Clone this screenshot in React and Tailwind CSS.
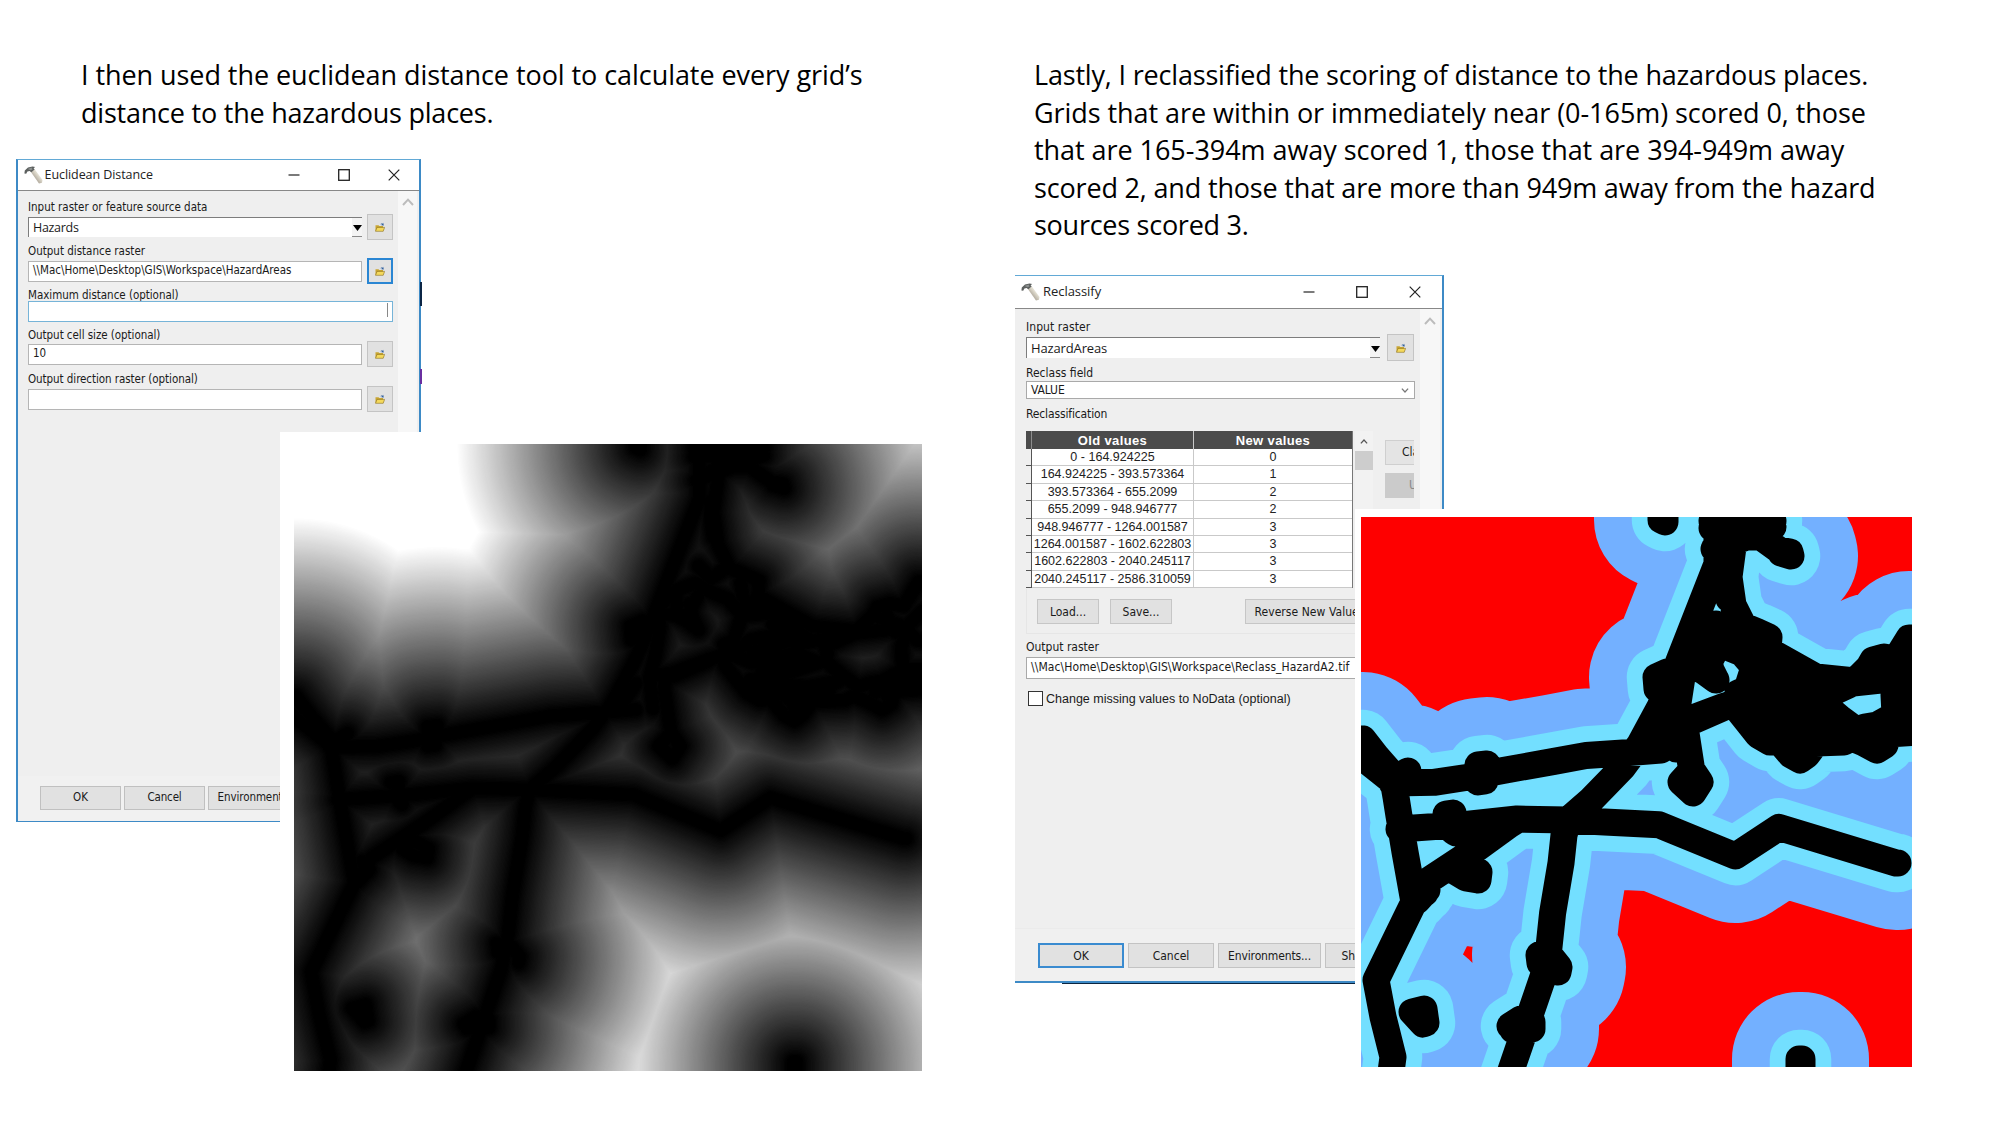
import React from "react";

/* Hazard source features, in map units (551 x 550). */
const ROADS = [
  "M2 222L16 240L31 257L35 280L38 299L44 335L53 385L15 463L22 500L32 540L28 570",
  "M-4 236L16 252L31 264",
  "M47 254L33 262M66 373L56 384M60 366L64 376",
  "M31 266L73 265.3L105 260.5L142 253.4L193 244.4L225 238.5L262 236L300 233",
  "M356 -5L356 47L318 144L308 170L299 190L279 227L262 250L230 283L207 303",
  "M371 -5L372 30L368 60L372 88L382 108M365 50L366 70L368 82",
  "M318 144L321 160L317 186L312 205L315 232",
  "M326 203L325 216L331 255M300 210L285 232",
  "M317 203L332 201L364 189L385 182M332 204L364 190",
  "M38 312L53 311L105 307.4L156 302L207 303L243.5 305L298 307.7L374.4 339L418 310.4L535 346L537 346",
  "M156 303L148 308L115 332L68 363L58 380",
  "M207 303L203 318L200 346L191.6 396L188 430L182 460L170 495L158 530L147 562",
];
const PLACES = [
  "M117 248L126 247L124 264L117 265Z",
  "M295 160L296 172L306 155Z",
  "M351 11L412 10L353 32L372 20L396 20L412 4L351 4",
  "M400 20L418 33L429 35L430 39L420 36",
  "M300 -3L300 3L304 5L304 -3Z",
  "M320 265L331 253L339 265L332 276Z",
  "M85 297L92 296L91 303L92 314L95 316",
  "M118 355L117 363L105 361L95 355L105 348Z",
  "M178 438L179 446L190 440L198 450L197 455",
  "M149 509L160 502L171 505L171 512L152 513",
  "M51 495L63 492L65 506L62 507Z",
  "M438 542L441 542L441 560L438 560Z",
];
const DISTRICT = [
  "M355 107L366 118L380 108L397 115L408 120L407 133L455 160L494 164L508 150L512 143L523 140L535 142L548 121L556 121",
  "M318 144L336 128L352 122L366 130L381 136L393 150L386 172L377 176M336 130L335 150L344 155L355 163M347 140L350 153L355 163",
  "M321 149L345 151L354 134M392 122L394 134",
  "M551 147L540 158L533 178L534 198L551 198M515 153L534 160L546 172L556 173",
  "M534 198L516 208L504 210L495 213L480 202L466 190L468 184L466 178L492 166L520 163",
  "M378 178L378 194L386 204L397 218L409 225L418 224L430 238L439 243L446 238L455 226L483 225L491 221L503 226L516 233L524 228L527 217L556 215",
  "M407 133L398 150L420 148L450 170L420 168L400 172L385 185L402 192L440 183L460 192L430 202L400 207L450 213L478 208L440 228L420 213",
  "M510 218L534 208L551 205",
  "M420 158L436 172L420 178L402 182M440 176L460 172L480 168M410 200L440 193M400 212L420 220L450 220L470 216M440 236L436 222M396 140L412 142M520 150L528 165M520 220L545 208",
];
const SOURCES = [...ROADS, ...PLACES, ...DISTRICT].join("");

const STEPS = 140;
const REACH = 160;
const BANDS = Array.from({ length: STEPS }, (_, i) => {
  const d = REACH * (1 - i / STEPS);
  const g = Math.max(0, Math.min(255, Math.round(((d - 5) / 153) * 255)));
  return { width: 2 * d, color: `rgb(${g},${g},${g})` };
});

function DistanceMap() {
  return (
    <svg viewBox="0 0 551 550" preserveAspectRatio="none" className="block h-[627px] w-[628px] overflow-hidden" fill="none" strokeLinecap="round" strokeLinejoin="round">
      <defs><path id="dist-src" d={SOURCES} /></defs>
      <rect width="551" height="550" fill="#fff" />
      {BANDS.map((b, i) => (
        <use key={i} href="#dist-src" stroke={b.color} strokeWidth={b.width} />
      ))}
    </svg>
  );
}

function ScoreMap() {
  return (
    <svg viewBox="0 0 551 550" className="block h-[550px] w-[551px] overflow-hidden" fill="none" strokeLinecap="round" strokeLinejoin="round">
      <defs><path id="score-src" d={SOURCES} /></defs>
      <rect width="551" height="550" fill="#fe0000" />
      <use href="#score-src" stroke="#73b0ff" strokeWidth="134" />
      <use href="#score-src" stroke="#73dfff" strokeWidth="58.5" />
      <use href="#score-src" stroke="#000" strokeWidth="27" />
    </svg>
  );
}

function Hammer({ className }) {
  return (
    <svg viewBox="0 0 19 18" className={className}>
      <defs>
        <linearGradient id="hammer-handle" x1="0" y1="1" x2="1" y2="0">
          <stop offset="0.3" stopColor="#a8a093" />
          <stop offset="0.6" stopColor="#e0dccf" />
        </linearGradient>
      </defs>
      <path d="M6.4 5.2L10.2 2.8L18.5 14L18 16.8L15 17.4Z" fill="url(#hammer-handle)" />
      <path d="M0.4 7.4L0.8 4.6L4 1.6L8.5 0.4L11.2 0.9L9.6 2.2L10.6 3.6L7.3 6.2L5.6 4.9L3.4 5.6L2.2 7.8Z" fill="#5c605f" />
      <path d="M3.5 3L7.5 1.6L8.6 3.2L6.8 4.2Z" fill="#8d9190" />
    </svg>
  );
}

function FolderButton({ className = "", active = false }) {
  return (
    <div className={`flex shrink-0 items-center justify-center bg-[#e1e1e1] ${active ? "border-2 border-[#2a86d3]" : "border border-[#c4c4c4]"} ${className}`}>
      <svg viewBox="0 0 10 10" className="h-[10px] w-[10px]">
        <path d="M0.5 9V3.2H3.5L4.3 4H8V9Z" fill="#c9a634" />
        <path d="M0.5 9.3L2 5.4H9.6L8.2 9.3Z" fill="#f4d95c" stroke="#8a6d1c" strokeWidth="0.6" />
        <path d="M5 2.8C6 1.2 7 1.4 7.6 1.8L8.2 0.8L8.8 3.4L6.4 3.2L7 2.5C6.3 2.2 5.7 2.3 5 2.8Z" fill="#2f5f9e" />
      </svg>
    </div>
  );
}

function TitleBar({ title, className, titleClass, gaps }) {
  return (
    <div className={`flex items-center border-b border-[#888] bg-white ${className}`}>
      <Hammer className="h-[18px] w-[19px] shrink-0" />
      <span className={`whitespace-nowrap font-['Open_Sans',sans-serif] text-[#222] ${titleClass}`}>{title}</span>
      <svg viewBox="0 0 12 12" className={`ml-auto h-[12px] w-[12px] shrink-0 ${gaps}`}>
        <path d="M0.5 6H11.5" stroke="#222" strokeWidth="1.2" />
      </svg>
      <svg viewBox="0 0 12 12" className={`h-[12px] w-[12px] shrink-0 ${gaps}`}>
        <rect x="0.7" y="0.7" width="10.6" height="10.6" fill="none" stroke="#222" strokeWidth="1.3" />
      </svg>
      <svg viewBox="0 0 12 12" className="h-[12px] w-[12px] shrink-0">
        <path d="M0.7 0.7L11.3 11.3M11.3 0.7L0.7 11.3" stroke="#222" strokeWidth="1.2" />
      </svg>
    </div>
  );
}

function Label({ children, className = "" }) {
  return <div className={`whitespace-nowrap text-[#1a1a1a] ${className}`}>{children}</div>;
}

function Combo({ value, className }) {
  return (
    <div className={`flex items-center justify-between border-l border-t-[1.5px] border-[#7d7d7d] bg-white pl-[4px] font-['Open_Sans',sans-serif] text-[#1a1a1a] ${className}`}>
      <span>{value}</span>
      <span className="flex h-full w-[10px] flex-col items-center justify-end border-b border-[#8a8a8a] bg-[#f4f4f4] pb-[5px]">
        <svg viewBox="0 0 9 6" className="h-[6px] w-[9px] shrink-0"><path d="M0 0H9L4.5 6Z" fill="#000" /></svg>
      </span>
    </div>
  );
}

function Chevron({ className }) {
  return (
    <svg viewBox="0 0 12 8" className={className} fill="none">
      <path d="M1 7L6 1.6L11 7" stroke="currentColor" strokeWidth="2" />
    </svg>
  );
}

function PushButton({ children, className = "" }) {
  return <div className={`flex shrink-0 items-center justify-center whitespace-nowrap bg-[#e1e1e1] text-[#1a1a1a] ${className}`}>{children}</div>;
}

function EuclideanDialog() {
  return (
    <div className="relative ml-[16px] mt-[19px] flex h-[663px] w-[405px] flex-col border border-l-2 border-r-2 border-[#3d8ac6] border-t-[#62a9d6] bg-[#efefef] font-['DejaVu_Sans_Condensed','DejaVu_Sans',sans-serif] text-[11.5px]">
      <TitleBar title="Euclidean Distance" className="h-[31px] pl-[6px] pr-[19px]" titleClass="ml-[1.5px] text-[12.5px] tracking-[-0.07px]" gaps="mr-[38px]" />
      <div className="flex flex-1">
        <div className="flex flex-1 flex-col items-start pl-[10px] leading-[16px]">
          <Label className="mt-[8px] h-[15px] tracking-[0px]">Input raster or feature source data</Label>
          <div className="flex h-[26px] items-center gap-[5px]">
            <Combo value="Hazards" className="h-[20px] w-[334px] text-[12.5px] tracking-[-0.3px]" />
            <FolderButton className="h-[26px] w-[26px]" />
          </div>
          <Label className="mt-[3px] h-[15px] tracking-[0px]">Output distance raster</Label>
          <div className="flex h-[26px] items-center gap-[5px]">
            <div className="h-[21px] w-[334px] border border-[#b5b5b5] bg-white pl-[4px] leading-[17px] tracking-[0px] text-[#1a1a1a]">{"\\\\Mac\\Home\\Desktop\\GIS\\Workspace\\HazardAreas"}</div>
            <FolderButton className="h-[26px] w-[26px]" active />
          </div>
          <Label className="mt-[3px] h-[14px] tracking-[-0.03px]">Maximum distance (optional)</Label>
          <div className="flex h-[21px] w-[365px] items-start justify-end border border-[#76b4d8] bg-white pr-[4px] pt-[1px]">
            <span className="h-[14px] w-px bg-[#888]" />
          </div>
          <Label className="mt-[5px] h-[15px] tracking-[-0.05px]">Output cell size (optional)</Label>
          <div className="-mt-px flex h-[26px] items-center gap-[5px]">
            <div className="h-[21px] w-[334px] border border-[#b5b5b5] bg-white pl-[4px] leading-[17px] text-[#1a1a1a]">10</div>
            <FolderButton className="h-[26px] w-[26px]" />
          </div>
          <Label className="mt-[4px] h-[15px] tracking-[-0.06px]">Output direction raster (optional)</Label>
          <div className="flex h-[26px] items-center gap-[5px]">
            <div className="h-[21px] w-[334px] border border-[#b5b5b5] bg-white" />
            <FolderButton className="h-[26px] w-[26px]" />
          </div>
        </div>
        <div className="mr-[2px] flex w-[19px] justify-center bg-[#f7f7f7] pt-[7px] text-[#bcbcbc]">
          <Chevron className="h-[8px] w-[12px]" />
        </div>
      </div>
      <div className="flex h-[45px] items-start gap-[3px] bg-[#f1f1f1] pl-[22px] pt-[10px]">
        <PushButton className="h-[24px] w-[81px] border border-[#c0c0c0]">OK</PushButton>
        <PushButton className="h-[24px] w-[81px] border border-[#c0c0c0] tracking-[-0.15px]">Cancel</PushButton>
        <PushButton className="h-[24px] w-[99px] border border-[#c0c0c0] tracking-[-0.1px]">Environments...</PushButton>
      </div>
      <span className="absolute -right-[3px] top-[122px] h-[24px] w-[2px] bg-[#0b2545]" />
      <span className="absolute -right-[3px] top-[209px] h-[15px] w-[2px] bg-[#6a2fa0]" />
    </div>
  );
}

const RECLASS = [
  ["0 - 164.924225", "0"],
  ["164.924225 - 393.573364", "1"],
  ["393.573364 - 655.2099", "2"],
  ["655.2099 - 948.946777", "2"],
  ["948.946777 - 1264.001587", "3"],
  ["1264.001587 - 1602.622803", "3"],
  ["1602.622803 - 2040.245117", "3"],
  ["2040.245117 - 2586.310059", "3"],
];

function ReclassTable() {
  return (
    <div className="w-[327px] border-r border-[#777] bg-white font-['Liberation_Sans',Arial,sans-serif] text-[12.5px]">
      <div className="flex h-[18px] bg-[#4b4b4b] text-[13px] font-bold leading-[19px] text-white">
        <span className="w-[6px] border-r border-[#8d8d8d]" />
        <span className="w-[162px] border-r border-[#c9c9c9] text-center tracking-[0.36px]">Old values</span>
        <span className="flex-1 text-center tracking-[0.36px]">New values</span>
      </div>
      {RECLASS.map(([range, score]) => (
        <div key={range} className="flex h-[17.4px] leading-[16.6px] text-[#222]">
          <span className="w-[6px] border-b border-r border-[#555] bg-[#efefef]" />
          <span className="w-[162px] whitespace-nowrap border-b border-r border-[#c9c9c9] text-center tracking-[0.02px]">{range}</span>
          <span className="flex-1 border-b border-[#c9c9c9] text-center">{score}</span>
        </div>
      ))}
    </div>
  );
}

function ReclassifyDialog() {
  return (
    <div className="ml-[15px] mt-[31px] flex h-[708px] w-[429px] flex-col border-b-2 border-r-2 border-t border-[#3d8ac6] border-t-[#62a9d6] bg-[#efefef] font-['DejaVu_Sans_Condensed','DejaVu_Sans',sans-serif] text-[12px]">
      <TitleBar title="Reclassify" className="h-[33px] pl-[6px] pr-[21px]" titleClass="ml-[3px] text-[13px] tracking-[-0.05px]" gaps="mr-[41px]" />
      <div className="flex flex-1">
        <div className="flex flex-1 flex-col items-start pl-[11px] leading-[16px]">
          <Label className="mt-[10px] h-[16px] tracking-[0.07px]">Input raster</Label>
          <div className="-mt-px flex h-[27px] items-center gap-[7px]">
            <Combo value="HazardAreas" className="h-[21px] w-[354px] text-[13px] tracking-[-0.14px]" />
            <FolderButton className="h-[27px] w-[27px]" />
          </div>
          <Label className="mt-[4px] h-[16px] tracking-[0px]">Reclass field</Label>
          <div className="flex h-[18px] w-[389px] items-center justify-between border border-[#a9a9a9] bg-white pl-[4px] pr-[5px] text-[#1a1a1a]">
            <span className="tracking-[-0.1px]">VALUE</span>
            <Chevron className="h-[5px] w-[8px] rotate-180 text-[#777]" />
          </div>
          <Label className="mt-[7px] h-[16px] tracking-[-0.14px]">Reclassification</Label>
          <div className="mt-[9px] flex h-[158px] items-start">
            <ReclassTable />
            <div className="ml-[2px] flex w-[18px] flex-col items-center self-stretch bg-[#f2f2f2] pt-[8px]">
              <Chevron className="h-[5px] w-[8px] text-[#555]" />
              <span className="mt-[7px] h-[19px] w-full bg-[#cdcdcd]" />
            </div>
            <div className="ml-[12px] flex w-[29px] flex-col gap-[8px] overflow-hidden pt-[9px] text-[#1a1a1a]">
              <div className="h-[25px] w-[60px] border border-[#cfcfcf] bg-[#e4e4e4] pl-[16px] leading-[23px]">Classify...</div>
              <div className="h-[25px] w-[60px] bg-[#cbcbcb] pl-[24px] leading-[24px] text-[#8a8a8a]">Unique...</div>
            </div>
          </div>
          <div className="flex h-[45px] w-[389px] items-start border-b border-l border-[#e6e6e6] pl-[10px] pt-[10px]">
            <PushButton className="h-[25px] w-[62px] border border-[#c6c6c6]">Load...</PushButton>
            <PushButton className="ml-[11px] h-[25px] w-[62px] border border-[#c6c6c6]">Save...</PushButton>
            <PushButton className="ml-[73px] h-[25px] w-[129px] border border-[#c6c6c6] tracking-[0.06px]">Reverse New Values</PushButton>
          </div>
          <Label className="mt-[5px] h-[16px] tracking-[0px]">Output raster</Label>
          <div className="mt-[2px] h-[22px] w-[354px] border border-[#a9a9a9] bg-white pl-[4px] leading-[18px] tracking-[0.09px] text-[#1a1a1a]">{"\\\\Mac\\Home\\Desktop\\GIS\\Workspace\\Reclass_HazardA2.tif"}</div>
          <div className="mt-[12px] flex h-[15px] items-center gap-[3px] pl-[2px]">
            <span className="h-[15px] w-[15px] border-[1.5px] border-[#333] bg-white" />
            <span className="font-['Liberation_Sans',Arial,sans-serif] text-[12.5px] tracking-[0px] text-[#1a1a1a]">Change missing values to NoData (optional)</span>
          </div>
        </div>
        <div className="mr-[2px] flex w-[20px] justify-center bg-[#f7f7f7] pt-[8px] text-[#bcbcbc]">
          <Chevron className="h-[8px] w-[12px]" />
        </div>
      </div>
      <div className="flex h-[53px] items-start gap-[4px] border-t border-[#ebebeb] bg-[#f0f0f0] pl-[23px] pt-[14px]">
        <PushButton className="h-[25px] w-[86px] border-2 border-[#3a8bd0]">OK</PushButton>
        <PushButton className="h-[25px] w-[86px] border border-[#c3c3c3]">Cancel</PushButton>
        <PushButton className="h-[25px] w-[103px] border border-[#c3c3c3] tracking-[-0.13px]">Environments...</PushButton>
        <PushButton className="h-[25px] w-[90px] border border-[#c3c3c3]">Show Help</PushButton>
      </div>
    </div>
  );
}

function Line({ children, className }) {
  return <span className={`block whitespace-nowrap ${className}`}>{children}</span>;
}

export default function App() {
  return (
    <main className="flex h-[1125px] w-[2000px] overflow-hidden bg-white">
      <section className="relative w-[1000px] shrink-0">
        <p className="ml-[81px] h-[140px] pt-[56px] font-['Open_Sans',sans-serif] text-[27px] leading-[37.5px] text-black">
          <Line className="tracking-[-0.06px]">I then used the euclidean distance tool to calculate every grid’s</Line>
          <Line className="tracking-[-0.22px]">distance to the hazardous places.</Line>
        </p>
        <EuclideanDialog />
        <div className="absolute left-[280px] top-[432px] bg-white pb-[20px] pl-[14px] pr-[20px] pt-[12px]">
          <DistanceMap />
        </div>
      </section>
      <section className="relative w-[1000px] shrink-0">
        <p className="ml-[34px] h-[244px] pt-[56px] font-['Open_Sans',sans-serif] text-[27px] leading-[37.5px] text-black">
          <Line className="tracking-[-0.18px]">Lastly, I reclassified the scoring of distance to the hazardous places.</Line>
          <Line className="tracking-[-0.06px]">Grids that are within or immediately near (0-165m) scored 0, those</Line>
          <Line className="tracking-[-0.05px]">that are 165-394m away scored 1, those that are 394-949m away</Line>
          <Line className="tracking-[-0.17px]">scored 2, and those that are more than 949m away from the hazard</Line>
          <Line className="tracking-[-0.26px]">sources scored 3.</Line>
        </p>
        <ReclassifyDialog />
        <div className="ml-[62px] h-px w-[293px] bg-[#0a2540]" />
        <div className="absolute left-[355px] top-[509px] bg-white pb-[20px] pl-[6px] pr-[20px] pt-[8px]">
          <ScoreMap />
        </div>
      </section>
    </main>
  );
}
